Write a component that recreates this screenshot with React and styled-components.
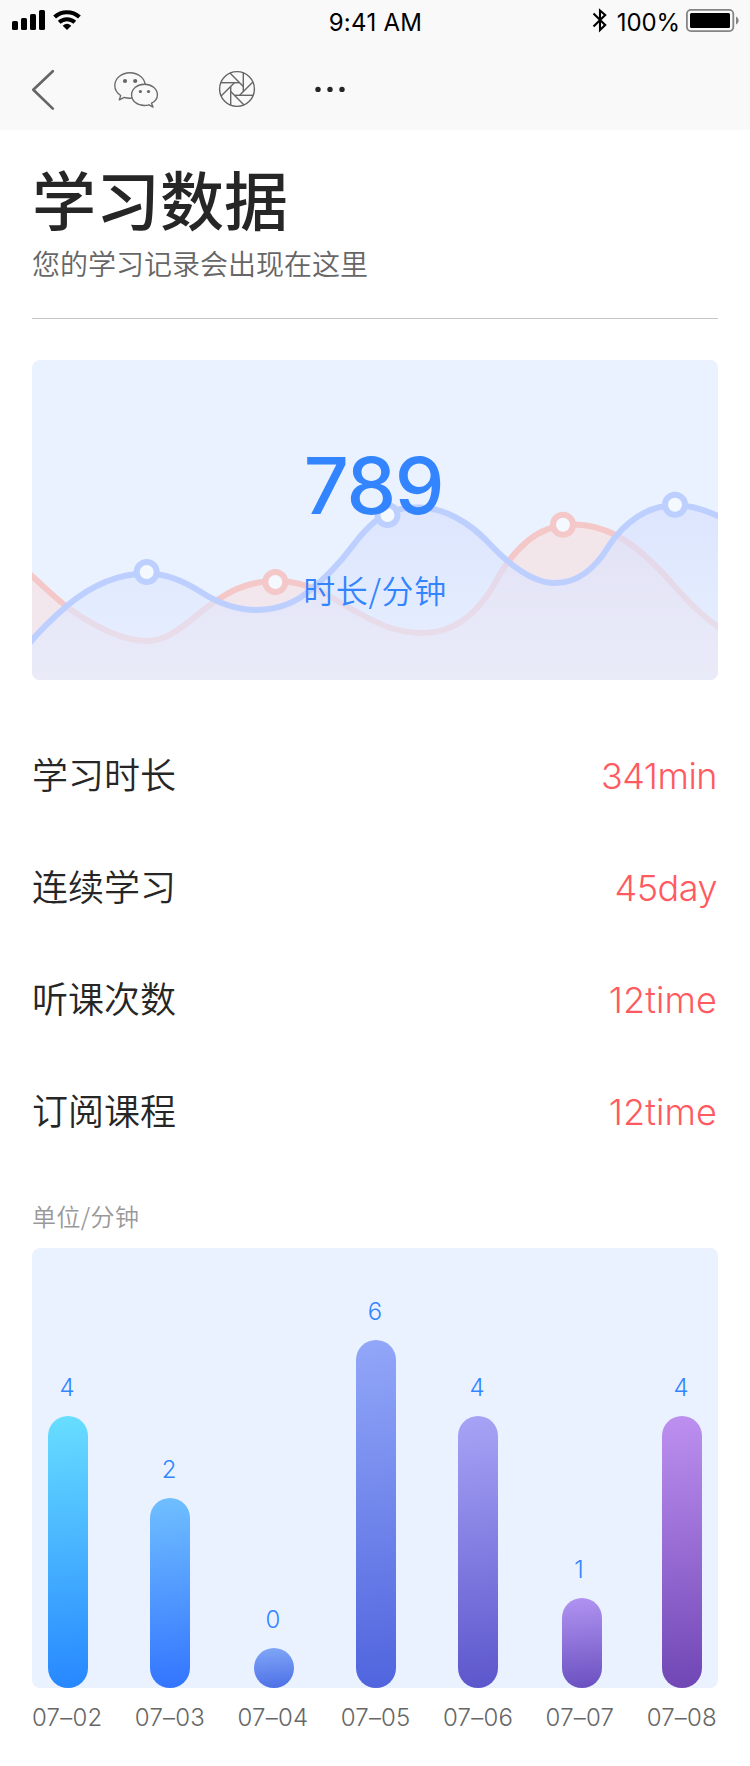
import React from "react";
import styled, { createGlobalStyle } from "styled-components";

const GlobalStyle = createGlobalStyle`
  * { box-sizing: border-box; }
  body {
    margin: 0;
    background: #fff;
    font-family: Inter, "Noto Sans CJK SC", sans-serif;
    color: #262626;
  }
`;

const Page = styled.div`
  width: 750px;
  height: 1766px;
  background: #fff;
  overflow: hidden;
`;

const Header = styled.header`
  height: 130px;
  background: #f9f9f9;
`;

const StatusBar = styled.div`
  height: 40px;
  display: grid;
  grid-template-columns: 1fr auto 1fr;
  padding: 0 11px 0 12px;
  color: #000;
`;

const StatusGroup = styled.div`
  display: flex;
  align-items: flex-start;
  justify-content: ${(p) => (p.$end ? "flex-end" : "flex-start")};
`;

const StatusText = styled.span`
  font-size: 24px;
  line-height: 30px;
  padding-top: 8px;
  font-weight: 370;
  white-space: nowrap;
  letter-spacing: ${(p) => p.$spacing || "0.3px"};
  margin-left: ${(p) => p.$left || "0"};
  margin-right: ${(p) => p.$right || "0"};
`;

const Icon = styled.svg`
  display: block;
  flex: none;
  margin-left: ${(p) => p.$left || "0"};
`;

const NavBar = styled.nav`
  height: 90px;
  display: flex;
  align-items: flex-start;
  padding: 28px 0 0 28px;
`;

const Content = styled.main`
  padding: 0 32px;
`;

const Title = styled.h1`
  margin: 0;
  padding-top: 21px;
  font-family: "Noto Sans CJK SC", sans-serif;
  font-size: 64px;
  line-height: 92px;
  font-weight: 500;
`;

const Subtitle = styled.p`
  margin: 0;
  height: 75px;
  padding-top: 2px;
  font-family: "Noto Sans CJK SC", sans-serif;
  font-size: 28px;
  line-height: 36px;
  font-weight: 350;
  color: #666;
`;

const Divider = styled.hr`
  margin: 0 0 41px;
  border: 0;
  height: 1px;
  background: #c4c4c4;
`;

const SummaryCard = styled.section`
  display: grid;
  height: 320px;
  border-radius: 8px;
  background: #eaf2ff;
  overflow: hidden;
  > * { grid-area: 1 / 1; }
`;

const SummaryText = styled.div`
  display: flex;
  flex-direction: column;
  align-items: center;
  z-index: 1;
  color: #3385ff;
`;

const SummaryNumber = styled.div`
  margin-top: 75px;
  padding-right: 3px;
  font-size: 79px;
  line-height: 100px;
  font-weight: 450;
  letter-spacing: -1.4px;
`;

const SummaryLabel = styled.div`
  margin-top: 32px;
  font-family: "Noto Sans CJK SC", sans-serif;
  font-size: 32px;
  line-height: 44px;
  font-weight: 350;
  letter-spacing: 0.6px;
`;

const StatList = styled.dl`
  margin: 39px 0 0;
`;

const StatRow = styled.div`
  height: 112px;
  display: flex;
  align-items: center;
  justify-content: space-between;
  font-size: 36px;
`;

const StatName = styled.dt`
  padding-bottom: 4px;
  font-family: "Noto Sans CJK SC", sans-serif;
  font-weight: 350;
`;

const StatValue = styled.dd`
  margin: 0;
  padding: 1px 1px 0 0;
  font-weight: 340;
  letter-spacing: ${(p) => p.$spacing}px;
  color: #ff5a5f;
`;

const Unit = styled.div`
  height: 81px;
  padding-top: 32px;
  font-family: "Noto Sans CJK SC", sans-serif;
  font-size: 24px;
  line-height: 34px;
  font-weight: 350;
  letter-spacing: 0.4px;
  color: #999;
`;

const Chart = styled.section`
  height: 440px;
  display: flex;
  align-items: flex-end;
  padding-left: 16px;
  border-radius: 8px;
  background: #eaf2ff;
`;

const BarColumn = styled.div`
  width: 40px;
  flex: none;
  display: flex;
  flex-direction: column;
  align-items: center;
  margin-right: ${(p) => p.$gap}px;
`;

const BarValue = styled.span`
  margin: 0 ${(p) => p.$nudge || 2}px 13px 0;
  font-size: 24px;
  line-height: 30px;
  font-weight: 320;
  color: #3385ff;
`;

const Bar = styled.div`
  width: 40px;
  height: ${(p) => p.$height}px;
  border-radius: 20px;
  background: linear-gradient(175deg, ${(p) => p.$from}, ${(p) => p.$to});
`;

const Dates = styled.div`
  display: flex;
  justify-content: space-between;
  padding: 15px 1px 0 0;
  font-size: 24px;
  line-height: 30px;
  font-weight: 340;
  letter-spacing: 0.2px;
  color: #666;
`;

const stats = [
  { name: "学习时长", value: "341min", spacing: -0.5 },
  { name: "连续学习", value: "45day", spacing: -0.5 },
  { name: "听课次数", value: "12time", spacing: 0.1 },
  { name: "订阅课程", value: "12time", spacing: 0.1 },
];

const bars = [
  { date: "07–02", value: 4, height: 272, gap: 62, from: "#68deff", to: "#2687ff" },
  { date: "07–03", value: 2, height: 190, gap: 64, from: "#70bfff", to: "#3374ff" },
  { date: "07–04", value: 0, height: 40, gap: 62, from: "#81a8f8", to: "#4c6ee6" },
  { date: "07–05", value: 6, height: 348, gap: 62, from: "#92a7f8", to: "#5064de" },
  { date: "07–06", value: 4, height: 272, gap: 64, from: "#a7a4f6", to: "#5c56cc" },
  { date: "07–07", value: 1, height: 90, gap: 60, from: "#b194f1", to: "#6a50c0" },
  { date: "07–08", value: 4, height: 272, gap: 0, from: "#bd90f0", to: "#7046b5" },
];

const BLUE_LINE =
  "M-4 285C0 280 14 264 34.7 246C62 223 90 213.500 115 213.500C135 213.500 152 221 169.700 232.500C190 245.500 207 250 224.700 250C250 250 268 239 277 231C290 221 305 207 321.300 185C333 169 343 160 355 153C366 148 377 147.500 388 147.500C412 148 437 162 456.300 182.500C481 209 503 223 523 223C546 223 564 207 576.300 186.700C592 163 615 145.300 643 145.300C660 145.300 674 150.500 692 158.500";
const RED_LINE =
  "M-4 212.500C8 223 22 237 34.700 246.700C62 267 92 281 115.300 281C142 281 162 254 188 238.300C205 227 223 221 243 221C261 221 276 224 294 234C320 250 342 262 357 267.500C368 271 380 273 391.300 273C424 273 446 252 462 225C474 201 496 172 525 166.500C541 163 561 163.500 584.700 175.500C604 186 621 202 638 221C654 239 668 255 692 271";

const Waves = () => (
  <svg width="686" height="320" viewBox="0 0 686 320" fill="none">
    <defs>
      <linearGradient id="redArea" gradientUnits="userSpaceOnUse" x1="0" y1="160" x2="0" y2="320">
        <stop offset="0" stopColor="#f3e5e9" />
        <stop offset="1" stopColor="#f0e8ef" />
      </linearGradient>
      <linearGradient id="blueArea" gradientUnits="userSpaceOnUse" x1="0" y1="145" x2="0" y2="320">
        <stop offset="0" stopColor="#d6defd" />
        <stop offset="1" stopColor="#e5edff" />
      </linearGradient>
    </defs>
    <path d={RED_LINE + "V320H-4Z"} fill="url(#redArea)" />
    <path d={RED_LINE} stroke="#f4c8c8" strokeWidth="6" />
    <path d={BLUE_LINE + "V320H-4Z"} fill="url(#blueArea)" fillOpacity="0.62" />
    <path d={BLUE_LINE} stroke="#bccfff" strokeWidth="6" />
    <g strokeWidth="6" fill="#f4f8ff">
      <circle cx="114.700" cy="212" r="10" stroke="#bccfff" />
      <circle cx="355.500" cy="155" r="10" stroke="#bccfff" />
      <circle cx="643" cy="144.700" r="10" stroke="#bccfff" />
      <circle cx="243.300" cy="222" r="10" stroke="#f4c8c8" />
      <circle cx="531" cy="164.700" r="10" stroke="#f4c8c8" />
    </g>
  </svg>
);

const SignalIcon = () => (
  <Icon width="34" height="32" viewBox="0 0 34 32">
    <rect x="0" y="21" width="6" height="9" rx="1.500" />
    <rect x="9" y="18" width="6" height="12" rx="1.500" />
    <rect x="18" y="14" width="6" height="16" rx="1.500" />
    <rect x="27" y="10" width="6" height="20" rx="1.500" />
  </Icon>
);

const WifiIcon = () => (
  <Icon $left="7px" width="28" height="32" viewBox="0 0 28 32">
    <path d="M1.600 17A18.500 18.500 0 0 1 26.400 17" fill="none" stroke="#000" strokeWidth="4.200" />
    <path d="M6.200 22.200A11.500 11.500 0 0 1 21.800 22.200" fill="none" stroke="#000" strokeWidth="4" />
    <path d="M9.700 25.800Q14 21.900 18.300 25.800L14 30Z" />
  </Icon>
);

const BluetoothIcon = () => (
  <Icon width="16" height="34" viewBox="0 0 16 34">
    <path d="M1.500 13.600L13.200 25L8 30V10.500L13.200 15L1.500 26.600" fill="none" stroke="#000" strokeWidth="2.100" />
  </Icon>
);

const BatteryIcon = () => (
  <Icon width="53" height="34" viewBox="0 0 53 34">
    <rect x="0.900" y="9.900" width="46.400" height="21.200" rx="4" fill="none" stroke="#858585" strokeWidth="1.800" />
    <rect x="4" y="13" width="40" height="15" rx="1.500" />
    <path d="M50 16.500C53.500 18 53.500 23 50 24.500Z" fill="#858585" />
  </Icon>
);

const BackIcon = () => (
  <Icon width="30" height="44" viewBox="28 68 30 44">
    <path d="M52.800 71.200L33.300 89.700L52.800 108.600" fill="none" stroke="#666" strokeWidth="2.700" strokeLinecap="round" strokeLinejoin="round" />
  </Icon>
);

const WechatIcon = () => (
  <Icon $left="54px" width="50" height="44" viewBox="112 68 50 44">
    <g fill="#f9f9f9" stroke="#6a6a6a" strokeWidth="1.350" strokeLinejoin="round">
      <path d="M120.700 95.500C116.800 93 114.800 89.500 114.800 85.500C114.800 78.300 121.500 72.700 129.900 72.700C138.300 72.700 145.200 78.300 145.200 85.500C145.200 92.800 138.300 98.200 129.900 98.200C127.700 98.200 126 98 124.300 97.400L119.300 99.900Z" />
      <path d="M151.500 103.200C155.300 101.300 157.400 98.300 157.400 94.900C157.400 88.800 151.600 84.200 144.500 84.200C137.400 84.200 131.600 88.800 131.600 94.900C131.600 101 137.400 105.500 144.500 105.500C146.200 105.500 147.700 105.200 149.100 104.800L153 107.100Z" />
    </g>
    <g fill="#666">
      <circle cx="125" cy="81" r="2.100" />
      <circle cx="135.200" cy="81" r="2.100" />
      <circle cx="140.400" cy="91.500" r="1.600" />
      <circle cx="148.500" cy="91.500" r="1.600" />
    </g>
  </Icon>
);

const ApertureIcon = () => (
  <Icon $left="56px" width="38" height="44" viewBox="-19 -21 38 44">
    <g fill="none" stroke="#666" strokeWidth="1.400">
      <circle r="17.400" />
      {[0, 45, 90, 135, 180, 225, 270, 315].map((a) => (
        <path key={a} d="M6.300 -16.200V2.600" transform={`rotate(${a})`} />
      ))}
    </g>
  </Icon>
);

const MoreIcon = () => (
  <Icon $left="58px" width="32" height="44" viewBox="314 68 32 44" fill="#262626">
    <circle cx="318" cy="89.400" r="2.700" />
    <circle cx="330" cy="89.400" r="2.700" />
    <circle cx="342" cy="89.400" r="2.700" />
  </Icon>
);

export default function App() {
  return (
    <Page>
      <GlobalStyle />
      <Header>
        <StatusBar>
          <StatusGroup>
            <SignalIcon />
            <WifiIcon />
          </StatusGroup>
          <StatusText>9:41 AM</StatusText>
          <StatusGroup $end>
            <BluetoothIcon />
            <StatusText $spacing="-0.1px" $left="9px" $right="6px">100%</StatusText>
            <BatteryIcon />
          </StatusGroup>
        </StatusBar>
        <NavBar>
          <BackIcon />
          <WechatIcon />
          <ApertureIcon />
          <MoreIcon />
        </NavBar>
      </Header>
      <Content>
        <Title>学习数据</Title>
        <Subtitle>您的学习记录会出现在这里</Subtitle>
        <Divider />
        <SummaryCard>
          <Waves />
          <SummaryText>
            <SummaryNumber>789</SummaryNumber>
            <SummaryLabel>时长/分钟</SummaryLabel>
          </SummaryText>
        </SummaryCard>
        <StatList>
          {stats.map((s) => (
            <StatRow key={s.name}>
              <StatName>{s.name}</StatName>
              <StatValue $spacing={s.spacing}>{s.value}</StatValue>
            </StatRow>
          ))}
        </StatList>
        <Unit>单位/分钟</Unit>
        <Chart>
          {bars.map((b) => (
            <BarColumn key={b.date} $gap={b.gap}>
              <BarValue $nudge={b.value === 1 ? 6 : 2}>{b.value}</BarValue>
              <Bar $height={b.height} $from={b.from} $to={b.to} />
            </BarColumn>
          ))}
        </Chart>
        <Dates>
          {bars.map((b) => (
            <span key={b.date}>{b.date}</span>
          ))}
        </Dates>
      </Content>
    </Page>
  );
}
